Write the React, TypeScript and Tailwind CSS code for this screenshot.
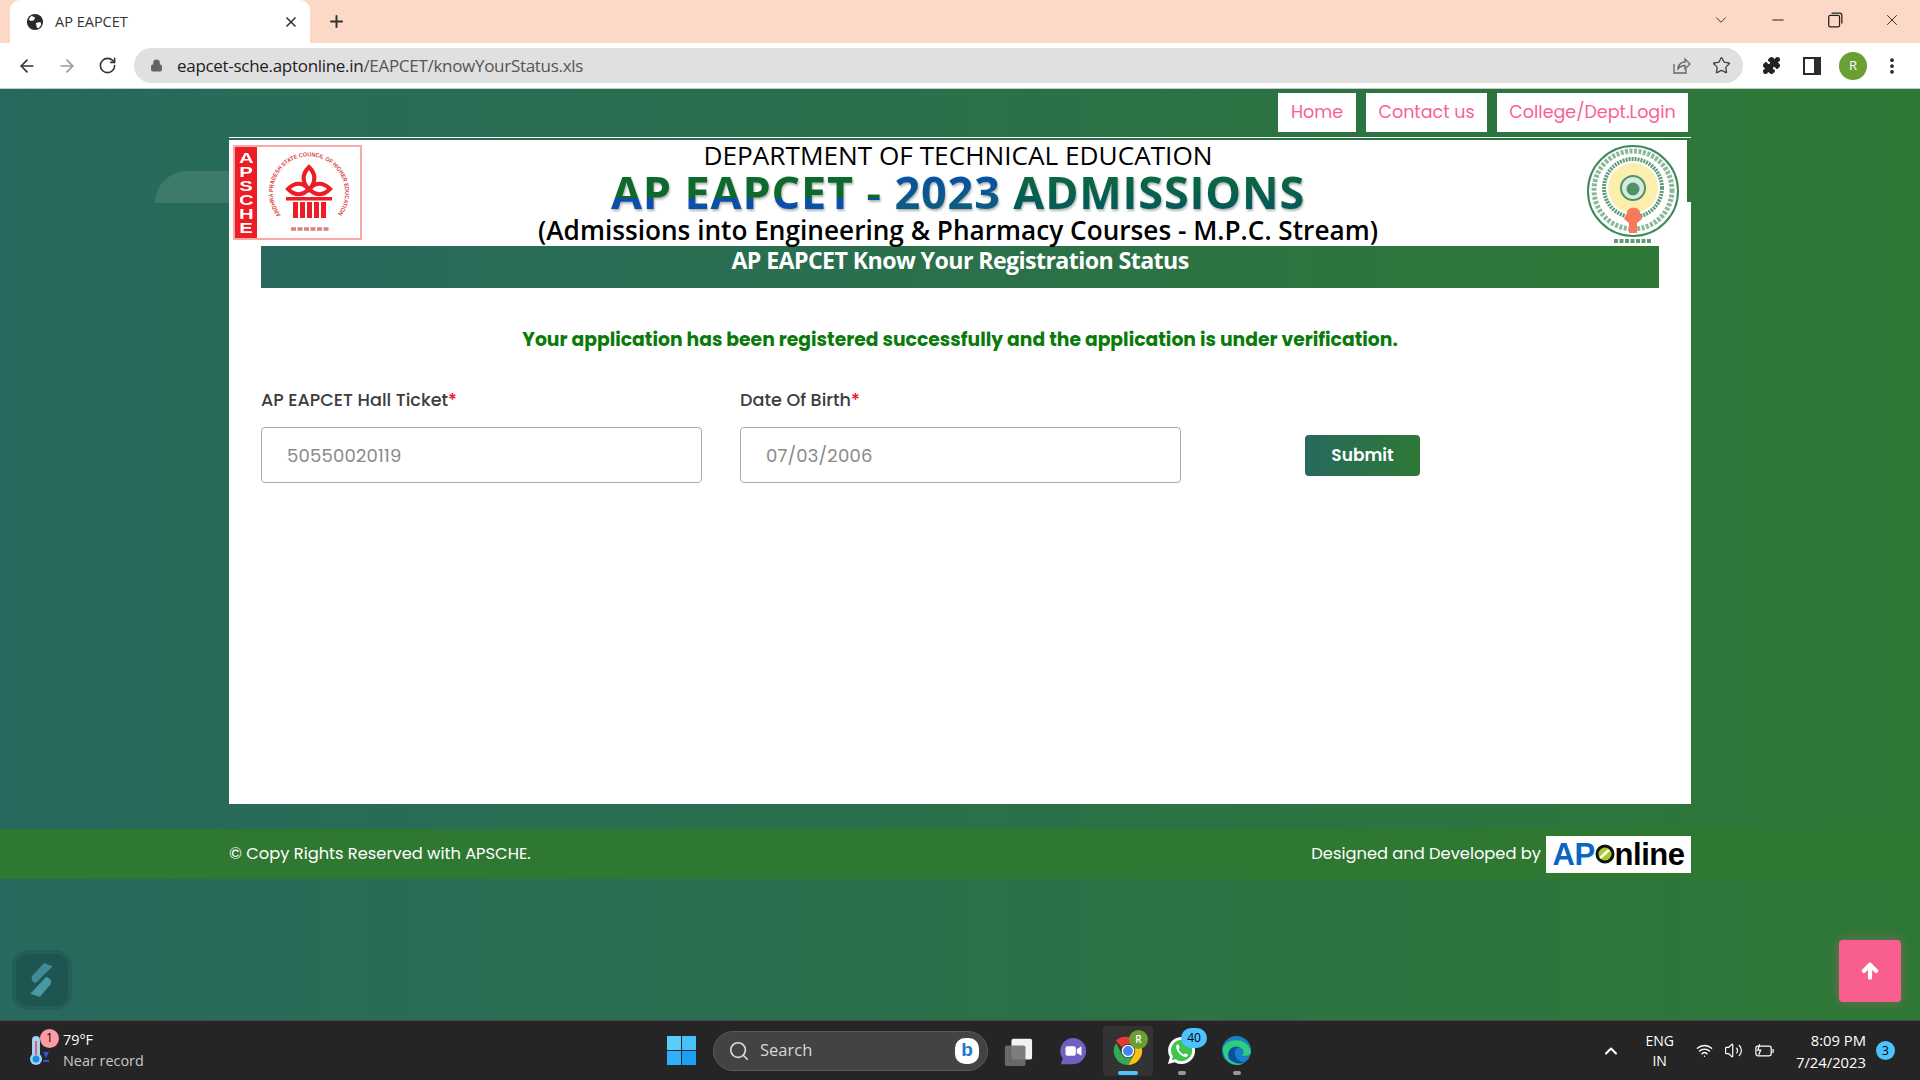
import React from "react";
import { ArrowLeft, ArrowRight, RotateCw, Lock, Star, X, Plus, ChevronDown, Minus, EllipsisVertical, Puzzle, Search, ChevronUp, Wifi, Volume2 } from "lucide-react";
import { FaArrowUp } from "react-icons/fa";

const ui = "font-['Poppins','Inter','Liberation_Sans',sans-serif]";

function ApscheLogo() {
  return (
    <div className="flex h-[95px] w-[129px] border-2 border-[#f7a8a8] bg-white">
      <div className="flex w-[22px] flex-col items-center justify-center bg-[#ee1c25] font-['Liberation_Sans',sans-serif] text-[15px] leading-[14px] font-bold text-white">
        <span className="scale-x-[1.35]">A</span>
        <span className="scale-x-[1.35]">P</span>
        <span className="scale-x-[1.35]">S</span>
        <span className="scale-x-[1.35]">C</span>
        <span className="scale-x-[1.35]">H</span>
        <span className="scale-x-[1.35]">E</span>
      </div>
      <svg viewBox="0 0 103 91" className="h-full flex-1">
        <defs>
          <path id="apsche-ring" d="M24 68A36 36 0 1 1 80 68" />
        </defs>
        <text className="font-['Liberation_Sans',sans-serif]" fontSize="6" fontWeight="700" fill="#d9434a">
          <textPath href="#apsche-ring" textLength="160" lengthAdjust="spacingAndGlyphs">ANDHRA PRADESH STATE COUNCIL OF HIGHER EDUCATION</textPath>
        </text>
        <path d="M52 20c7 7 7 15 0 23c-7-8-7-16 0-23z" fill="none" stroke="#ee1c25" strokeWidth="4" />
        <path d="M31 42c7-7 14-7 21 0c7-7 14-7 21 0c-7 7-14 7-21 0c-7 7-14 7-21 0z" fill="none" stroke="#ee1c25" strokeWidth="4" />
        <rect x="29" y="50" width="46" height="3.500" fill="#ee1c25" />
        <path d="M36 55h5v16h-5zM43 55h5v16h-5zM50 55h5v16h-5zM57 55h5v16h-5zM64 55h5v16h-5z" fill="#ee1c25" />
        <path d="M34 82h38" stroke="#d98080" strokeWidth="3.500" strokeDasharray="5 1.500" />
      </svg>
    </div>
  );
}

function StateEmblem() {
  return (
    <svg viewBox="0 0 93 99" className="h-[99px] w-[93px] blur-[0.4px]">
      <ellipse cx="46" cy="46" rx="45" ry="45" fill="#fff" stroke="#3d8a5a" strokeWidth="2" />
      <ellipse cx="46" cy="45" rx="39" ry="39" fill="none" stroke="#8db89a" strokeWidth="5" strokeDasharray="3 1.500" />
      <circle cx="46" cy="43" r="29" fill="none" stroke="#5e9c74" strokeWidth="4" strokeDasharray="2 1" />
      <circle cx="46" cy="43" r="25" fill="#fcefae" />
      <circle cx="46" cy="43" r="12" fill="#dbeadf" stroke="#4f9169" strokeWidth="2" />
      <circle cx="46" cy="44" r="6.500" fill="#4f9169" />
      <path d="M40 68c0-7 13-7 13 0l2 6l-5 4v10H42V78l-5-4z" fill="#f8795a" />
      <path d="M27 96h38" stroke="#5e9c74" strokeWidth="4" strokeDasharray="4 1.500" />
    </svg>
  );
}

function ApOnlineLogo() {
  return (
    <div className="flex h-[37px] w-[145px] items-center justify-center bg-white font-['Liberation_Sans',sans-serif] text-[31px] leading-none font-bold tracking-[-0.5px]">
      <span className="text-[#0a66c2]">AP</span>
      <svg viewBox="0 0 20 20" className="h-[20px] w-[20px]">
        <circle cx="10" cy="10" r="8" fill="#a9c92f" stroke="#111" strokeWidth="3" />
        <path d="M5 14l9-8" stroke="#fff" strokeWidth="2.500" />
      </svg>
      <span className="text-black">nline</span>
    </div>
  );
}

function ChromeIcon() {
  return (
    <svg viewBox="0 0 32 32" className="h-[30px] w-[30px]">
      <path d="M16 1a15 15 0 0 1 13 7.500H16a7.500 7.500 0 0 0-6.500 3.800L3 4.700A15 15 0 0 1 16 1z" fill="#e33b2e" />
      <path d="M29 8.500A15 15 0 0 1 16 31l6.500-11.300A7.500 7.500 0 0 0 22.500 12z" fill="#fbc116" />
      <path d="M3.500 7.500L9.500 19.700A7.500 7.500 0 0 0 22.500 19.700L16 31A15 15 0 0 1 3.500 7.500z" fill="#34a853" />
      <circle cx="16" cy="16" r="6" fill="#4285f4" stroke="#fff" strokeWidth="1.500" />
    </svg>
  );
}

function BrowserChrome() {
  return (
    <>
      <div className="flex h-[43px] items-end bg-[#fcd9c6] pl-[10px]">
        <div className="flex h-[43px] w-[300px] items-center rounded-t-[10px] bg-white pr-[11px] pl-[16px] font-['Open_Sans',sans-serif] text-[14.5px] text-[#333]">
          <svg viewBox="0 0 20 20" className="mr-[11px] h-[18px] w-[18px]">
            <circle cx="10" cy="10" r="9" fill="#2a2a2e" />
            <path d="M6 3l4 2l-1 3l-4 1l-2-2zM11 11l5-1l1 3l-3 4l-2-1z" fill="#fff" />
          </svg>
          <span className="flex-1">AP EAPCET</span>
          <X size={16} strokeWidth={2.5} className="text-[#333]" />
        </div>
        <Plus size={19} strokeWidth={2.5} className="mb-[12px] ml-[17px] text-[#333]" />
        <div className="flex-1" />
        <div className="mb-[14px] flex items-center gap-[39px] pr-[19px] text-[#222]">
          <ChevronDown size={18} strokeWidth={1.2} />
          <Minus size={18} strokeWidth={1.4} />
          <svg viewBox="0 0 14 14" className="h-[18px] w-[18px] p-[1px]" fill="none" stroke="#222" strokeWidth="1.100">
            <rect x="1.500" y="3" width="9.500" height="10" rx="1.500" />
            <path d="M4 1h7a2 2 0 0 1 2 2v7" />
          </svg>
          <X size={18} strokeWidth={1.2} />
        </div>
      </div>
      <div className="flex h-[46px] items-center border-b-[1px] border-[#c9c9c9] bg-white">
        <div className="flex items-center gap-[20px] pl-[17px] text-[#333]">
          <ArrowLeft size={20} strokeWidth={2} />
          <ArrowRight size={20} strokeWidth={2} className="text-[#999]" />
          <RotateCw size={19} strokeWidth={2} className="ml-[1px]" />
        </div>
        <div className="ml-[17px] flex h-[35px] w-[1609px] items-center rounded-full bg-[#e0e0e0] pr-[12px] pl-[16px] font-['Open_Sans',sans-serif] text-[17px] tracking-[-0.3px] text-[#555]">
          <Lock size={13} fill="#5f6368" strokeWidth={2} className="mr-[14px] text-[#5f6368]" />
          <span>
            <span className="text-[#222]">eapcet-sche.aptonline.in</span>/EAPCET/knowYourStatus.xls
          </span>
          <div className="flex-1" />
          <div className="flex items-center gap-[21px] text-[#5f6368]">
            <svg viewBox="0 0 20 20" className="h-[20px] w-[20px]" fill="none" stroke="#666" strokeWidth="1.300">
              <path d="M3 8v9h12v-4" />
              <path d="M7 13c0-5 4-7 7-7V3l5 5l-5 5V9.500c-3 0-5 1-7 3.500z" />
            </svg>
            <Star size={19} strokeWidth={1.7} className="text-[#444]" />
          </div>
        </div>
        <div className="ml-[19px] flex items-center text-[#222]">
          <Puzzle size={19} fill="#222" strokeWidth={1.5} />
          <svg viewBox="0 0 18 18" className="ml-[22px] h-[18px] w-[18px]">
            <path d="M0 0h18v18H0z" fill="#2b2b2e" />
            <path d="M2 2h9v14H2z" fill="#fff" />
          </svg>
          <div className="ml-[18px] flex h-[28px] w-[28px] items-center justify-center rounded-full bg-[#6b9e33] font-['Open_Sans',sans-serif] text-[13px] text-white">
            R
          </div>
          <EllipsisVertical size={20} strokeWidth={2.5} className="ml-[15px]" />
        </div>
      </div>
    </>
  );
}

function Field(props: { label: string; value: string }) {
  return (
    <div className="w-[441px]">
      <label className="block text-[17.6px] leading-[24px] font-medium text-[#3d3d3d]">
        {props.label}
        <span className="text-[#ee1133]">*</span>
      </label>
      <div className="mt-[15px] flex h-[56px] items-center rounded-[4px] border border-[#ababab] bg-white pl-[25px] text-[18px] tracking-[0.2px] text-[#8a8a8a]">
        {props.value}
      </div>
    </div>
  );
}

function Portal() {
  return (
    <div className={`relative flex flex-1 flex-col bg-[linear-gradient(90deg,#27695e_0%,#2a7049_50%,#2e7836_100%)] ${ui}`}>
      {/* faded shape behind the header, left of the panel */}
      <div className="absolute top-[82px] left-[155px] h-[32px] w-[74px] rounded-tl-[60px] bg-white/10" />
      <div className="mx-auto w-[1462px] pt-[4px]">
        <nav className="flex justify-end gap-[10px] pr-[3px] text-[17.5px] text-[#fb5f8e]">
          <a className="flex h-[39px] w-[78px] items-center justify-center bg-white">Home</a>
          <a className="flex h-[39px] w-[121px] items-center justify-center bg-white">Contact us</a>
          <a className="flex h-[39px] w-[191px] items-center justify-center bg-white">College/Dept.Login</a>
        </nav>
        <div className="mt-[5px] h-[1px] bg-white" />
        <div className="relative mt-[2px] bg-white">
          <div className="absolute top-0 right-0 h-[62px] w-[4px] bg-[#2e7836]" />
          <div className="flex h-[106px] items-start justify-between pt-[5px] pr-[11px] pl-[4px]">
            <ApscheLogo />
            <div className="mt-[-6px] mr-[33px] flex flex-col items-center font-['Open_Sans',sans-serif] text-black">
              <div className="text-[26.2px] leading-[32px] font-medium">DEPARTMENT OF TECHNICAL EDUCATION</div>
              <div className="text-[45px] leading-[42px] font-bold tracking-[0.85px] whitespace-pre drop-shadow-[1px_2px_1px_rgba(0,0,0,0.3)]">
                <span className="inline-block bg-[linear-gradient(180deg,#0d6a2c_64%,#0b4fa8_64%)] bg-clip-text text-transparent">AP EAPCET - </span>
                <span className="inline-block bg-[linear-gradient(180deg,#0b4fa8_0%,#0b5f7a_100%)] bg-clip-text text-transparent">2023 </span>
                <span className="inline-block bg-[linear-gradient(180deg,#0d6a3c_0%,#03585f_100%)] bg-clip-text text-transparent">ADMISSIONS</span>
              </div>
              <div className="text-[26.2px] leading-[34px] font-semibold">(Admissions into Engineering &amp; Pharmacy Courses - M.P.C. Stream)</div>
            </div>
            <StateEmblem />
          </div>
          <div className="px-[32px]">
            <div className="h-[42px] bg-[linear-gradient(90deg,#27695e,#2e7836)] text-center font-['Open_Sans',sans-serif] text-[23.2px] leading-[29px] font-bold tracking-[-0.6px] text-white">
              AP EAPCET Know Your Registration Status
            </div>
          </div>
          <div className="h-[516px] px-[32px]">
            <p className="pt-[37px] text-center text-[18.75px] leading-[30px] font-bold text-[#0a7a0a]">
              Your application has been registered successfully and the application is under verification.
            </p>
            <div className="mt-[33px] flex items-start gap-[38px]">
              <Field label="AP EAPCET Hall Ticket" value="50550020119" />
              <Field label="Date Of Birth" value="07/03/2006" />
              <button className="mt-[47px] ml-[86px] h-[41px] w-[115px] rounded-[4px] bg-[linear-gradient(90deg,#27695e,#2e7836)] text-[17px] font-semibold text-white">
                Submit
              </button>
            </div>
          </div>
        </div>
      </div>
      <footer className="mt-[25px] flex h-[50px] justify-center bg-[#2f7832]">
        <div className="flex w-[1462px] items-center justify-between text-[16.3px] text-white">
          <span>© Copy Rights Reserved with APSCHE.</span>
          <div className="flex items-center gap-[5px]">
            <span>Designed and Developed by</span>
            <ApOnlineLogo />
          </div>
        </div>
      </footer>
      {/* floating widgets */}
      <div className="absolute bottom-[10px] left-[12px] flex h-[60px] w-[60px] items-center justify-center rounded-[16px] border-[4px] border-[#235f58] bg-[#1e5550]">
        <svg viewBox="0 0 30 36" className="h-[40px] w-[32px]">
          <path d="M17 2l8 3L9 21c-3-1-5-4-3-7z" fill="#3e8a98" />
          <path d="M13 34l-9-3L19 15c3 1 6 4 4 7z" fill="#4a98a4" />
        </svg>
      </div>
      <button className="absolute right-[19px] bottom-[18px] flex h-[62px] w-[62px] items-center justify-center rounded-[4px] bg-[#f95f8e] text-white shadow-[0_0_12px_rgba(249,95,142,0.4)]">
        <FaArrowUp size={18} stroke="currentColor" strokeWidth={40} />
      </button>
    </div>
  );
}

function Taskbar() {
  return (
    <div className="flex h-[60px] items-center border-t border-[#4a4a4a] bg-[#252525] font-['Open_Sans',sans-serif] text-white">
      <div className="flex w-[667px] items-center pl-[28px]">
        <div className="relative h-[36px] w-[36px]">
          <svg viewBox="0 0 24 36" className="absolute top-[-1px] left-0 h-[36px] w-[24px]">
            <rect x="4" y="4" width="8" height="24" rx="4" fill="#9fd4f7" />
            <circle cx="8" cy="27" r="6" fill="#9fd4f7" />
            <rect x="7" y="9" width="2" height="14" fill="#f05a7a" />
            <circle cx="8" cy="27" r="3.500" fill="#1b8fe0" />
            <path d="M15 20h6l-3 6zM15 28h6v2h-6z" fill="#2f55d4" />
          </svg>
          <div className="absolute top-[-4px] left-[12px] flex h-[19px] w-[19px] items-center justify-center rounded-full bg-[#ff9aa2] text-[12px] text-black">1</div>
        </div>
        <div className="mt-[-2px] ml-[-1px] text-[14.4px] leading-[21px]">
          <div>79°F</div>
          <div className="text-[#c8c8c8]">Near record</div>
        </div>
      </div>
      <div className="flex flex-1 items-center">
        <div className="grid h-[29px] w-[29px] grid-cols-2 gap-[1px]">
          <div className="bg-[#5bcdfb]" />
          <div className="bg-[#45c2fb]" />
          <div className="bg-[#2eb0fa]" />
          <div className="bg-[#1a9ff5]" />
        </div>
        <div className="ml-[17px] flex h-[40px] w-[275px] items-center rounded-full border border-[#5a5a5a] bg-[#434343] pr-[8px] pl-[14px]">
          <Search size={22} strokeWidth={1.8} className="text-[#dcdcdc]" />
          <span className="ml-[10px] flex-1 text-[16.5px] text-[#d8d8d8]">Search</span>
          <div className="flex h-[26px] w-[24px] items-center justify-center rounded-[10px] bg-white font-['Liberation_Sans',sans-serif] text-[19px] font-bold text-[#1a78d6]">b</div>
        </div>
        <svg viewBox="0 0 32 32" className="ml-[15px] h-[30px] w-[30px]">
          <rect x="9" y="3" width="22" height="22" rx="2" fill="#f2f2f2" />
          <rect x="2" y="10" width="22" height="22" rx="2" fill="#707070" fillOpacity="0.900" />
        </svg>
        <svg viewBox="0 0 32 32" className="ml-[25px] h-[30px] w-[30px]">
          <path d="M16 2a14 14 0 0 1 14 14a14 14 0 0 1-14 14H3l2-6A14 14 0 0 1 16 2z" fill="#6f61c0" />
          <rect x="8" y="11" width="11" height="10" rx="2" fill="#fff" />
          <path d="M20 14l5-3v10l-5-3z" fill="#fff" />
        </svg>
        <div className="relative ml-[15px] flex h-[50px] w-[50px] items-center justify-center rounded-[4px] bg-[#333]">
          <ChromeIcon />
          <div className="absolute top-[4px] right-[5px] flex h-[19px] w-[19px] items-center justify-center rounded-full bg-[#6b9e33] text-[10px] font-semibold">R</div>
          <div className="absolute bottom-[1px] h-[4px] w-[20px] rounded-full bg-[#4cc2ff]" />
        </div>
        <div className="relative ml-[5px] flex h-[50px] w-[47px] items-center justify-center">
          <svg viewBox="0 0 32 32" className="h-[31px] w-[31px]">
            <path d="M16 2a14 14 0 0 1 0 28a14 14 0 0 1-7-2l-7 2l2-7A14 14 0 0 1 16 2z" fill="#fff" />
            <path d="M16 5a11 11 0 0 1 0 22a11 11 0 0 1-6-2l-4 1l1-4A11 11 0 0 1 16 5z" fill="#3fc351" />
            <path d="M11 10c2-2 3 2 3 3l-1 2c1 2 3 4 5 5l2-1c1 0 4 1 2 3c-3 3-14-6-11-12z" fill="#fff" />
          </svg>
          <div className="absolute top-[2px] right-[-2px] flex h-[20px] w-[26px] items-center justify-center rounded-full bg-[#4cc2ff] text-[12px] text-black">40</div>
          <div className="absolute bottom-[1px] h-[4px] w-[8px] rounded-full bg-[#9a9a9a]" />
        </div>
        <div className="relative ml-[12px] flex h-[50px] w-[39px] items-center justify-center">
          <svg viewBox="0 0 32 32" className="h-[31px] w-[31px]">
            <circle cx="16" cy="16" r="15" fill="#1a7fc8" />
            <path d="M2 14C4 4 26 0 31 17c0 4-6 5-10 4c4-2 3-7-2-8C12 12 8 20 14 26c2 2 6 4 10 3c-8 5-22 0-22-15z" fill="#2ecf7c" />
            <path d="M8 24c-3-8 5-15 12-11c-6-1-8 7-3 12c2 2 5 3 8 3c-5 3-14 1-17-4z" fill="#0c4f9e" />
          </svg>
          <div className="absolute bottom-[1px] h-[4px] w-[8px] rounded-full bg-[#9a9a9a]" />
        </div>
      </div>
      <div className="flex items-center pr-[25px]">
        <ChevronUp size={20} strokeWidth={2.5} />
        <div className="ml-[24px] text-center text-[14px] leading-[20px]">
          <div>ENG</div>
          <div>IN</div>
        </div>
        <Wifi size={17} className="ml-[22px]" />
        <Volume2 size={19} strokeWidth={1.5} className="ml-[11px]" />
        <svg viewBox="0 0 22 16" className="ml-[11px] h-[16px] w-[21px]" fill="none" stroke="#fff" strokeWidth="1.300">
          <rect x="2" y="3" width="16" height="10" rx="2" />
          <path d="M20 6v4" />
          <path d="M6 1L4 7h3l-2 5" />
        </svg>
        <div className="ml-[21px] text-right text-[14.8px] leading-[22px]">
          <div>8:09 PM</div>
          <div>7/24/2023</div>
        </div>
        <div className="ml-[10px] flex h-[19px] w-[19px] items-center justify-center rounded-full bg-[#4cc2ff] text-[12px] text-black">3</div>
      </div>
    </div>
  );
}

export default function App() {
  return (
    <div className="flex h-[1080px] w-[1920px] flex-col overflow-hidden">
      <BrowserChrome />
      <Portal />
      <Taskbar />
    </div>
  );
}
